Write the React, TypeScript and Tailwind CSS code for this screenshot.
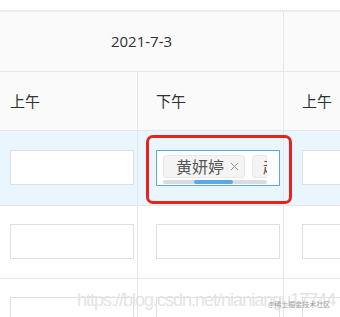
import React from "react"

const fonte = { fontFamily: '"Open Sans", "Noto Sans CJK SC", sans-serif' }

function Campo() {
  return <div className="w-[124px] h-[35px] shrink-0 bg-white border border-[#dcdfe6]" />
}

function Fechar() {
  return (
    <svg width="9" height="9" viewBox="0 0 10 10" fill="none" stroke="#909399" strokeWidth="1.1">
      <path d="M1 1l8 8M9 1l-8 8" />
    </svg>
  )
}

function Seletor() {
  return (
    <div className="w-[124px] h-[36px] bg-white border border-[#5aa6e6] pl-[6px] pt-[4px]">
      <div className="w-[104px] overflow-hidden">
        <div className="flex gap-[7px] w-max">
          <span className="h-[23px] w-[82px] flex items-center gap-[6px] pl-[12px] bg-[#f4f4f5] border border-[#e9e9eb] rounded-[3px] text-[16px] text-[#555]">
            黄妍婷
            <Fechar />
          </span>
          <span className="h-[23px] w-[60px] flex items-center pl-[10px] bg-[#f4f4f5] border border-[#e9e9eb] rounded-[3px] text-[16px] text-[#555]">
            赵
          </span>
        </div>
        <div className="mt-[2px] h-[4px] bg-[#d9dde3] rounded-full">
          <div className="ml-[31px] w-[39px] h-[4px] bg-[#5aa8e4] rounded-full" />
        </div>
      </div>
    </div>
  )
}

export default function App() {
  const linhas = [0, 1, 2]
  return (
    <div className="relative w-[340px] h-[317px] overflow-hidden bg-white" style={fonte}>
      <div className="h-[10px] bg-white" />
      <div className="h-[2px] bg-[#ebebeb]" />

      <div className="flex h-[60px] bg-[#fafafa] border-b border-[#e6e6e6]">
        <div className="w-[284px] shrink-0 border-r border-[#e6e6e6] flex items-center justify-center text-[15px] text-[#303133]">
          2021-7-3
        </div>
        <div className="flex-1" />
      </div>

      <div className="flex h-[59px] bg-[#fafafa] border-b border-[#e6e6e6] text-[15px] text-[#303133]">
        <div className="w-[138px] shrink-0 border-r border-[#e6e6e6] pl-[10px] flex items-center">上午</div>
        <div className="w-[146px] shrink-0 border-r border-[#e6e6e6] pl-[18px] flex items-center">下午</div>
        <div className="flex-1 pl-[18px] flex items-center">上午</div>
      </div>

      {linhas.map(i => (
        <div
          key={i}
          className={
            i === 0
              ? "flex h-[75px] bg-[#e9f6fd] border-b border-[#e6e6e6]"
              : "flex h-[73px] bg-white border-b border-[#e6e6e6]"
          }
        >
          <div className={i === 0 ? "w-[138px] shrink-0 border-r border-[#e6e6e6] pl-[10px] pt-[19px]" : "w-[138px] shrink-0 border-r border-[#e6e6e6] pl-[10px] pt-[18px]"}>
            <Campo />
          </div>
          <div className={i === 0 ? "w-[146px] shrink-0 border-r border-[#e6e6e6] pl-[18px] pt-[19px]" : "w-[146px] shrink-0 border-r border-[#e6e6e6] pl-[18px] pt-[18px]"}>
            {i === 0 ? <Seletor /> : <Campo />}
          </div>
          <div className={i === 0 ? "flex-1 pl-[18px] pt-[19px] overflow-hidden" : "flex-1 pl-[18px] pt-[18px] overflow-hidden"}>
            <Campo />
          </div>
        </div>
      ))}

      <div className="absolute left-[146px] top-[135px] w-[146px] h-[69px] border-[3px] border-[#e8231b] rounded-[7px]" />

      <div
        className="absolute left-[77px] top-[287px] text-[18px] tracking-[-1px] text-[#e4e4e4] whitespace-nowrap"
        style={{ fontFamily: '"Liberation Sans", sans-serif' }}
      >
        https://blog.csdn.net/nianiangu17744
      </div>
      <div className="absolute left-[268px] top-[300px] text-[7px] text-[#a0a0a0] whitespace-nowrap">
        @稀土掘金技术社区
      </div>
    </div>
  )
}
